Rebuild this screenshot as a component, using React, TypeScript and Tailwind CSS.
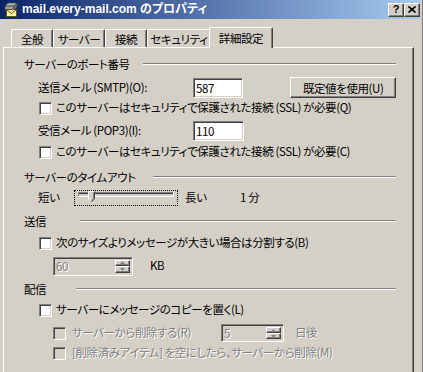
import React from "react";

const sunken =
  "border border-t-[#808080] border-l-[#808080] border-r-white border-b-white shadow-[inset_1px_1px_#404040,inset_-1px_-1px_#D4D0C8]";
const raised =
  "border border-t-white border-l-white border-r-[#404040] border-b-[#404040] shadow-[inset_-1px_-1px_#808080]";
const disabledText = "text-[#808080] [text-shadow:1px_1px_0_#ffffff]";

function Check({ disabled }: { disabled?: boolean }) {
  return (
    <div
      className={`w-[13px] h-[13px] shrink-0 ${sunken} ${disabled ? "bg-[#D4D0C8]" : "bg-white"}`}
    />
  );
}

function Etched() {
  return <div className="flex-1 h-[2px] border-t border-t-[#808080] border-b border-b-white" />;
}

function Header({ label, wClass }: { label: string; wClass: string }) {
  return (
    <div className="flex items-center h-[16px]">
      <span className={`${wClass} shrink-0 leading-[16px] whitespace-nowrap`}>{label}</span>
      <Etched />
    </div>
  );
}

function SpinArrows({ disabled }: { disabled?: boolean }) {
  const c = disabled ? "#808080" : "#000000";
  return (
    <div className="flex flex-col w-[15px] h-full shrink-0">
      <div className={`flex-1 flex items-center justify-center bg-[#D4D0C8] ${raised}`}>
        <svg width="5" height="3" viewBox="0 0 5 3">
          <path d="M2.5 0 L5 3 L0 3 Z" fill={c} />
        </svg>
      </div>
      <div className={`flex-1 flex items-center justify-center bg-[#D4D0C8] ${raised}`}>
        <svg width="5" height="3" viewBox="0 0 5 3">
          <path d="M0 0 L5 0 L2.5 3 Z" fill={c} />
        </svg>
      </div>
    </div>
  );
}

export default function App() {
  return (
    <div className="w-[423px] h-[372px] overflow-hidden bg-[#D4D0C8] border-r border-r-[#808080] font-['Noto_Sans_CJK_JP','Noto_Sans_CJK_SC',sans-serif] [font-feature-settings:'palt'] text-[11.5px] tracking-[-0.4px] text-black">
      {/* Title bar */}
      <div className="h-[19px] mr-[2px] flex items-center bg-[linear-gradient(to_right,#0A246A,#A6CAF0)] tracking-normal">
        <div className="w-[16px] h-[16px] ml-[3px] shrink-0">
          <svg width="16" height="16" viewBox="0 0 16 16">
            <path d="M2 4 L5 1 L14 1 L11 4 Z" fill="#C0C0C0" stroke="#404040" strokeWidth="0.8" />
            <path d="M2 4 L11 4 L11 8 L2 8 Z" fill="#A0A0A0" stroke="#404040" strokeWidth="0.8" />
            <path d="M11 4 L14 1 L14 5 L11 8 Z" fill="#707070" stroke="#404040" strokeWidth="0.8" />
            <rect x="3.5" y="7.5" width="10" height="7" fill="#FFF3A0" stroke="#605020" strokeWidth="1" />
            <path d="M3.5 7.5 L8.5 11.5 L13.5 7.5" fill="none" stroke="#605020" strokeWidth="1" />
          </svg>
        </div>
        <span className="ml-[3px] text-white font-bold text-[12px] leading-[19px] font-['Liberation_Sans','Noto_Sans_CJK_JP',sans-serif] whitespace-nowrap">
          mail.every-mail.com のプロパティ
        </span>
        <div className="flex-1" />
        <div className={`w-[16px] h-[14px] flex items-center justify-center bg-[#D4D0C8] ${raised}`}>
          <span className="font-bold text-[11px] leading-[11px] font-['Liberation_Sans',sans-serif]">?</span>
        </div>
        <div className={`w-[16px] h-[14px] flex items-center justify-center bg-[#D4D0C8] ${raised}`}>
          <svg width="8" height="7" viewBox="0 0 8 7">
            <path d="M0.5 0.5 L7.5 6.5 M7.5 0.5 L0.5 6.5" stroke="#000" strokeWidth="1.6" />
          </svg>
        </div>
      </div>

      {/* Tabs + panel */}
      <div className="ml-[3px] w-[411px] mt-[8px]">
        <div className="flex items-end h-[20px] pl-[8px] relative z-10">
          {[
            { t: "全般", w: "w-[42px]" },
            { t: "サーバー", w: "w-[52px]" },
            { t: "接続", w: "w-[42px]" },
            { t: "セキュリティ", w: "w-[64px]" },
          ].map((tab) => (
            <div
              key={tab.t}
              className={`${tab.w} h-[18px] flex items-center justify-center whitespace-nowrap rounded-t-[2px] border-t border-l border-r border-t-white border-l-white border-r-[#404040] shadow-[inset_-1px_0_#808080] leading-[16px]`}
            >
              {tab.t}
            </div>
          ))}
          <div className="w-[64px] h-[21px] -mx-[2px] -mb-[1px] flex items-start justify-center whitespace-nowrap pt-[2px] bg-[#D4D0C8] rounded-t-[2px] border-t border-l border-r border-t-white border-l-white border-r-[#404040] shadow-[inset_-1px_0_#808080] leading-[16px]">
            詳細設定
          </div>
        </div>
        <div className="h-[400px] border border-t-white border-l-white border-r-[#404040] border-b-[#404040] shadow-[inset_-1px_-1px_#808080] pl-[20px] pr-[17px] pt-[8px] flex flex-col">
          <Header label="サーバーのポート番号" wClass="w-[119px]" />

          <div className="mt-[5px] h-[21px] flex items-center pl-[14px]">
            <span className="w-[155px] shrink-0 whitespace-nowrap">送信メール (SMTP)(O):</span>
            <div className={`w-[51px] h-[20px] bg-white ${sunken} flex items-center pl-[2px] leading-[16px]`}>587</div>
            <div className={`ml-[47px] w-[107px] h-[21px] bg-[#D4D0C8] ${raised} flex items-center justify-center whitespace-nowrap leading-[16px]`}>
              既定値を使用(U)
            </div>
          </div>

          <div className="mt-[2px] h-[16px] flex items-center pl-[15px]">
            <Check />
            <span className="ml-[4px] whitespace-nowrap">このサーバーはセキュリティで保護された接続 (SSL) が必要(Q)</span>
          </div>

          <div className="mt-[5px] h-[20px] flex items-center pl-[14px]">
            <span className="w-[155px] shrink-0 whitespace-nowrap">受信メール (POP3)(I):</span>
            <div className={`w-[51px] h-[20px] bg-white ${sunken} flex items-center pl-[2px] leading-[16px]`}>110</div>
          </div>

          <div className="mt-[3px] h-[16px] flex items-center pl-[15px]">
            <Check />
            <span className="ml-[4px] whitespace-nowrap">このサーバーはセキュリティで保護された接続 (SSL) が必要(C)</span>
          </div>

          <div className="mt-[9px]">
            <Header label="サーバーのタイムアウト" wClass="w-[129px]" />
          </div>

          <div className="mt-[5px] h-[16px] flex items-center pl-[14px]">
            <span className="w-[36px] shrink-0">短い</span>
            <div className="w-[104px] h-[16px] border border-dotted border-black shrink-0">
              <svg width="102" height="14" viewBox="0 0 102 14">
                <path d="M3 1.5 H98" stroke="#808080" strokeWidth="1" />
                <path d="M3.5 2 V5.5" stroke="#808080" strokeWidth="1" />
                <path d="M4 2.5 H98" stroke="#404040" strokeWidth="1" />
                <path d="M4 3.5 H98" stroke="#D4D0C8" strokeWidth="1" />
                <path d="M3 5.5 H99" stroke="#ffffff" strokeWidth="1" />
                <path d="M98.5 1 V6" stroke="#ffffff" strokeWidth="1" />
                <path d="M13.5 0.5 H19.5 V8 L16.5 10.5 L13.5 8 Z" fill="#D4D0C8" stroke="none" />
                <path d="M13.5 9 V0.5 H19" stroke="#ffffff" strokeWidth="1" fill="none" />
                <path d="M19.5 0.5 V8 L16.5 10.5" stroke="#404040" strokeWidth="1" fill="none" />
                <path d="M18.5 1.5 V7.5 L16.5 9.3" stroke="#808080" strokeWidth="1" fill="none" />
              </svg>
            </div>
            <span className="ml-[7px] w-[55px] shrink-0">長い</span>
            <span className="whitespace-nowrap">1 分</span>
          </div>

          <div className="mt-[7px]">
            <Header label="送信" wClass="w-[56px]" />
          </div>

          <div className="mt-[6px] h-[16px] flex items-center pl-[15px]">
            <Check />
            <span className="ml-[4px] whitespace-nowrap">次のサイズよりメッセージが大きい場合は分割する(B)</span>
          </div>

          <div className="mt-[5px] h-[20px] flex items-center pl-[29px]">
            <div className={`w-[80px] h-[19px] bg-[#D4D0C8] ${sunken} flex items-center pl-[2px] pr-[2px] py-[2px]`}>
              <span className={`flex-1 leading-[14px] ${disabledText}`}>60</span>
              <SpinArrows disabled />
            </div>
            <span className="ml-[17px]">KB</span>
          </div>

          <div className="mt-[5px]">
            <Header label="配信" wClass="w-[52px]" />
          </div>

          <div className="mt-[5px] h-[16px] flex items-center pl-[15px]">
            <Check />
            <span className="ml-[4px] whitespace-nowrap">サーバーにメッセージのコピーを置く(L)</span>
          </div>

          <div className="mt-[5px] h-[20px] flex items-center pl-[29px]">
            <Check disabled />
            <span className={`ml-[6px] w-[149px] shrink-0 whitespace-nowrap ${disabledText}`}>サーバーから削除する(R)</span>
            <div className={`w-[63px] h-[18px] bg-[#D4D0C8] ${sunken} flex items-center pl-[2px] pr-[2px] py-[2px]`}>
              <span className={`flex-1 leading-[14px] ${disabledText}`}>5</span>
              <SpinArrows disabled />
            </div>
            <span className={`ml-[11px] ${disabledText}`}>日後</span>
          </div>

          <div className="mt-[2px] h-[16px] flex items-center pl-[29px]">
            <Check disabled />
            <span className={`ml-[6px] whitespace-nowrap ${disabledText}`}>[削除済みアイテム] を空にしたら、サーバーから削除(M)</span>
          </div>
        </div>
      </div>
    </div>
  );
}
